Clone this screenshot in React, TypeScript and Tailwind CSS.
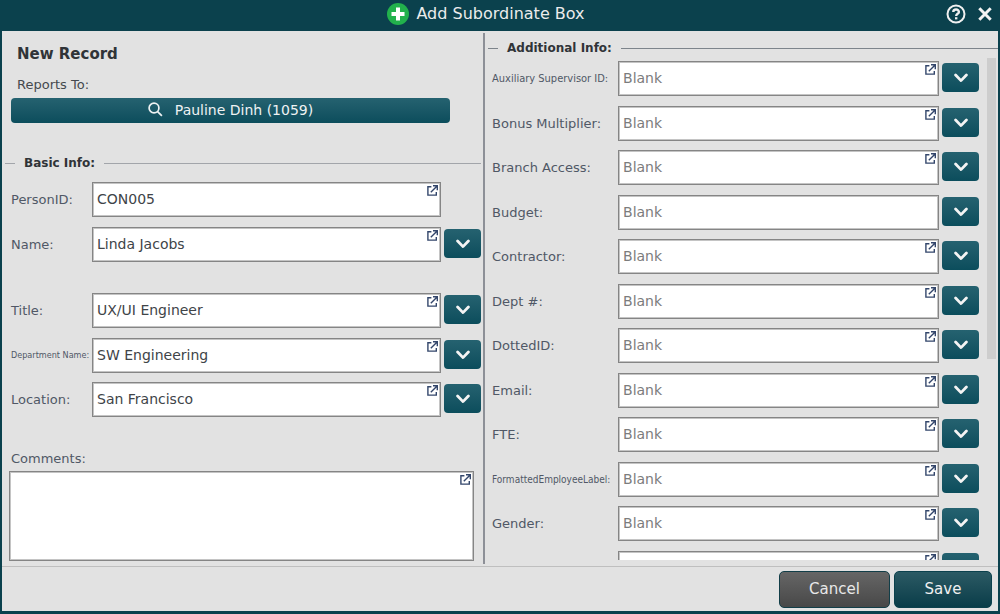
import React, { useState } from 'react';
import clsx from 'clsx';

type FieldDef = {
  id: string;
  label?: string;
  name?: string;
  value?: string;
  labelClass?: string;
  noPopout?: boolean;
  noPicker?: boolean;
  spaced?: boolean;
};

const BASIC_FIELDS: FieldDef[] = [
  { id: 'personId', label: 'PersonID:', value: 'CON005', noPicker: true },
  { id: 'name', label: 'Name:', value: 'Linda Jacobs', spaced: true },
  { id: 'title', label: 'Title:', value: 'UX/UI Engineer' },
  { id: 'department', label: 'Department Name:', value: 'SW Engineering', labelClass: "font-['DejaVu_Sans_Condensed',sans-serif] text-[9px]" },
  { id: 'location', label: 'Location:', value: 'San Francisco' },
];

const ADDITIONAL_FIELDS: FieldDef[] = [
  { id: 'auxSupervisor', label: 'Auxiliary Supervisor ID:', labelClass: "font-['DejaVu_Sans_Condensed',sans-serif] text-[11px]" },
  { id: 'bonus', label: 'Bonus Multiplier:' },
  { id: 'branch', label: 'Branch Access:' },
  { id: 'budget', label: 'Budget:', noPopout: true },
  { id: 'contractor', label: 'Contractor:' },
  { id: 'dept', label: 'Dept #:' },
  { id: 'dottedId', label: 'DottedID:' },
  { id: 'email', label: 'Email:' },
  { id: 'fte', label: 'FTE:' },
  { id: 'employeeLabel', label: 'FormattedEmployeeLabel:', labelClass: "font-['DejaVu_Sans_Condensed',sans-serif] text-[10px]" },
  { id: 'gender', label: 'Gender:' },
  { id: 'hireDate', name: 'Hire Date' },
];

const PopoutIcon = () => (
  <svg width="11" height="11" viewBox="0 0 11 11" fill="none" stroke="#33466b" strokeWidth="1.4">
    <path d="M4.4 1.7H.9v8.4h8.4V6.9" />
    <path d="M3.8 7.2 9.6 1.4M6 .8h4.3v4.4" />
  </svg>
);

const PopoutButton = ({ label }: { label?: string }) => (
  <button type="button" aria-label={`Expand ${label}`} className="absolute top-[3px] right-[3px] cursor-pointer">
    <PopoutIcon />
  </button>
);

const PickerButton = ({ label }: { label?: string }) => (
  <button
    type="button"
    aria-label={`Choose ${label}`}
    className="flex h-[29px] w-[37px] shrink-0 cursor-pointer items-center justify-center rounded-sm bg-linear-to-b from-[#256270] to-[#0b4d5c]"
  >
    <svg width="14" height="10" viewBox="0 0 14 10" fill="none" stroke="#f4f4f4" strokeWidth="2.8" strokeLinecap="round" strokeLinejoin="round">
      <path d="M1.6 2 7 7.6 12.4 2" />
    </svg>
  </button>
);

const FieldRow = ({ field, labelWidth }: { field: FieldDef; labelWidth: string }) => {
  const [value, setValue] = useState(field.value ?? '');
  const name = field.label ?? field.name;

  return (
    <div className={clsx('flex shrink-0 items-start odd:h-[45px] even:h-11', field.spaced && 'mb-[22px]')}>
      <label
        htmlFor={field.id}
        className={clsx('shrink-0 leading-[35px] whitespace-nowrap text-[#505866]', labelWidth, field.labelClass ?? 'text-[13px]')}
      >
        {field.label}
      </label>
      <div className="relative min-w-0 flex-1">
        <input
          id={field.id}
          aria-label={name}
          value={value}
          placeholder="Blank"
          onChange={e => setValue(e.target.value)}
          className="block h-[35px] w-full border border-[#858585] bg-white px-1 pb-[2px] text-sm text-[#404448] inset-ring inset-ring-[#c4c4c4] outline-none placeholder:text-[#7c7c7c]"
        />
        {!field.noPopout && <PopoutButton label={name} />}
      </div>
      <div className="flex h-[33px] w-10 shrink-0 items-center justify-end">
        {!field.noPicker && <PickerButton label={name} />}
      </div>
    </div>
  );
};

const SectionHeading = ({ children, line }: { children: React.ReactNode; line: string }) => (
  <div className="flex items-center gap-[9px]">
    <span className={clsx('h-px w-[10px]', line)} />
    <h2 className="text-xs leading-4 font-bold text-[#303438]">{children}</h2>
    <span className={clsx('h-px flex-1', line)} />
  </div>
);

export default function App() {
  const [comments, setComments] = useState('');

  return (
    <div className="flex h-screen flex-col bg-[#0b414d] px-[2px] pb-[3px] font-['DejaVu_Sans',Verdana,sans-serif]">
      {/* Title bar */}
      <header className="relative flex h-[31px] shrink-0 items-center justify-center gap-[7px] pr-7 pb-[3px]">
        <svg width="22" height="22" viewBox="0 0 22 22">
          <circle cx="11" cy="11" r="11" fill="#22b14c" />
          <path d="M11 4.5v13M4.5 11h13" stroke="#fff" strokeWidth="4" />
        </svg>
        <h1 className="text-base leading-5 text-[#ececec]">Add Subordinate Box</h1>
        <div className="absolute top-1 right-[6px] flex items-center gap-3">
          <button type="button" aria-label="Help" className="cursor-pointer">
            <svg width="20" height="20" viewBox="0 0 20 20" fill="none" stroke="#f0f0f0" strokeWidth="2">
              <circle cx="10" cy="10" r="8.5" />
              <path d="M7.3 8.1c0-3.5 5.6-3.3 5.6-.2 0 2-2.7 1.9-2.7 4" strokeWidth="2.4" />
              <path d="M10.2 13.2v2.2" strokeWidth="2.4" />
            </svg>
          </button>
          <button type="button" aria-label="Close" className="cursor-pointer">
            <svg width="14" height="14" viewBox="0 0 14 14" stroke="#f4f4f4" strokeWidth="3">
              <path d="m1.3 1.3 11.4 11.4M12.7 1.3 1.3 12.7" />
            </svg>
          </button>
        </div>
      </header>

      <main className="flex min-h-0 flex-1 bg-[#e2e2e2] pt-[2px] pb-[2px]">
        {/* Basic info */}
        <section className="flex min-w-0 flex-[482] flex-col">
          <div className="pt-[11px] pr-[33px] pl-[9px]">
            <h2 className="px-[6px] text-[15px] leading-5 font-bold text-[#303438]">New Record</h2>
            <p className="px-[6px] pt-[11px] text-[13px] leading-5 text-[#45494e]">Reports To:</p>
            <button
              type="button"
              className="mt-[3px] flex h-[25px] w-full cursor-pointer items-center justify-center gap-3 rounded-sm bg-linear-to-b from-[#256270] to-[#0b4d5c] pb-[2px] text-sm text-[#eef2f3]"
            >
              <svg width="15" height="15" viewBox="0 0 15 15" fill="none" stroke="#eef2f3" strokeWidth="1.7">
                <circle cx="6" cy="6" r="4.9" />
                <path d="m9.6 9.6 4.3 4.3" />
              </svg>
              Pauline Dinh (1059)
            </button>
          </div>
          <div className="pt-8 pr-[2px] pl-[3px]">
            <SectionHeading line="bg-[#a2a5aa]">Basic Info:</SectionHeading>
          </div>
          <div className="flex flex-col pt-[11px] pr-[2px] pl-[9px]">
            {BASIC_FIELDS.map(f => (
              <FieldRow key={f.id} field={f} labelWidth="w-[81px]" />
            ))}
          </div>
          <div className="flex min-h-0 flex-1 flex-col pt-[22px] pr-[9px] pb-[3px] pl-[7px]">
            <label htmlFor="comments" className="px-[2px] text-[13px] leading-5 text-[#505866]">Comments:</label>
            <div className="relative mt-[2px] flex min-h-0 flex-1">
              <textarea
                id="comments"
                value={comments}
                onChange={e => setComments(e.target.value)}
                className="w-full resize-none border border-[#858585] bg-white p-1 text-sm text-[#404448] inset-ring inset-ring-[#c4c4c4] outline-none"
              />
              <PopoutButton label="Comments" />
            </div>
          </div>
        </section>

        {/* Additional info */}
        <section className="flex min-w-0 flex-[514] flex-col border-l-2 border-[#8d9097]">
          <div className="pt-[7px] pl-[3px]">
            <SectionHeading line="bg-[#7d848b]">Additional Info:</SectionHeading>
          </div>
          <div className="mt-[2px] mb-1 flex min-h-0 flex-1">
            <div className="flex min-w-0 flex-1 flex-col overflow-hidden pt-[3px] pl-[7px]">
              {ADDITIONAL_FIELDS.map(f => (
                <FieldRow key={f.id} field={f} labelWidth="w-[126px]" />
              ))}
            </div>
            <div className="w-[19px] shrink-0 pr-[2px] pl-2">
              <div className="h-3/5 bg-[#cdcdcd]" />
            </div>
          </div>
        </section>
      </main>

      <footer className="flex shrink-0 justify-end gap-1 border-t border-[#bfbfbf] bg-[#e2e2e2] px-[6px] pt-1 pb-[3px]">
        <button
          type="button"
          className="h-[37px] w-[111px] cursor-pointer rounded-[5px] border border-[#123e48] bg-linear-to-b from-[#666] to-[#484848] text-[15px] text-[#e8e8e8]"
        >
          Cancel
        </button>
        <button
          type="button"
          className="h-[37px] w-[98px] cursor-pointer rounded-[5px] border border-[#0b414d] bg-linear-to-b from-[#2b5a64] to-[#083d49] text-[15px] text-[#f0f0f0]"
        >
          Save
        </button>
      </footer>
    </div>
  );
}
